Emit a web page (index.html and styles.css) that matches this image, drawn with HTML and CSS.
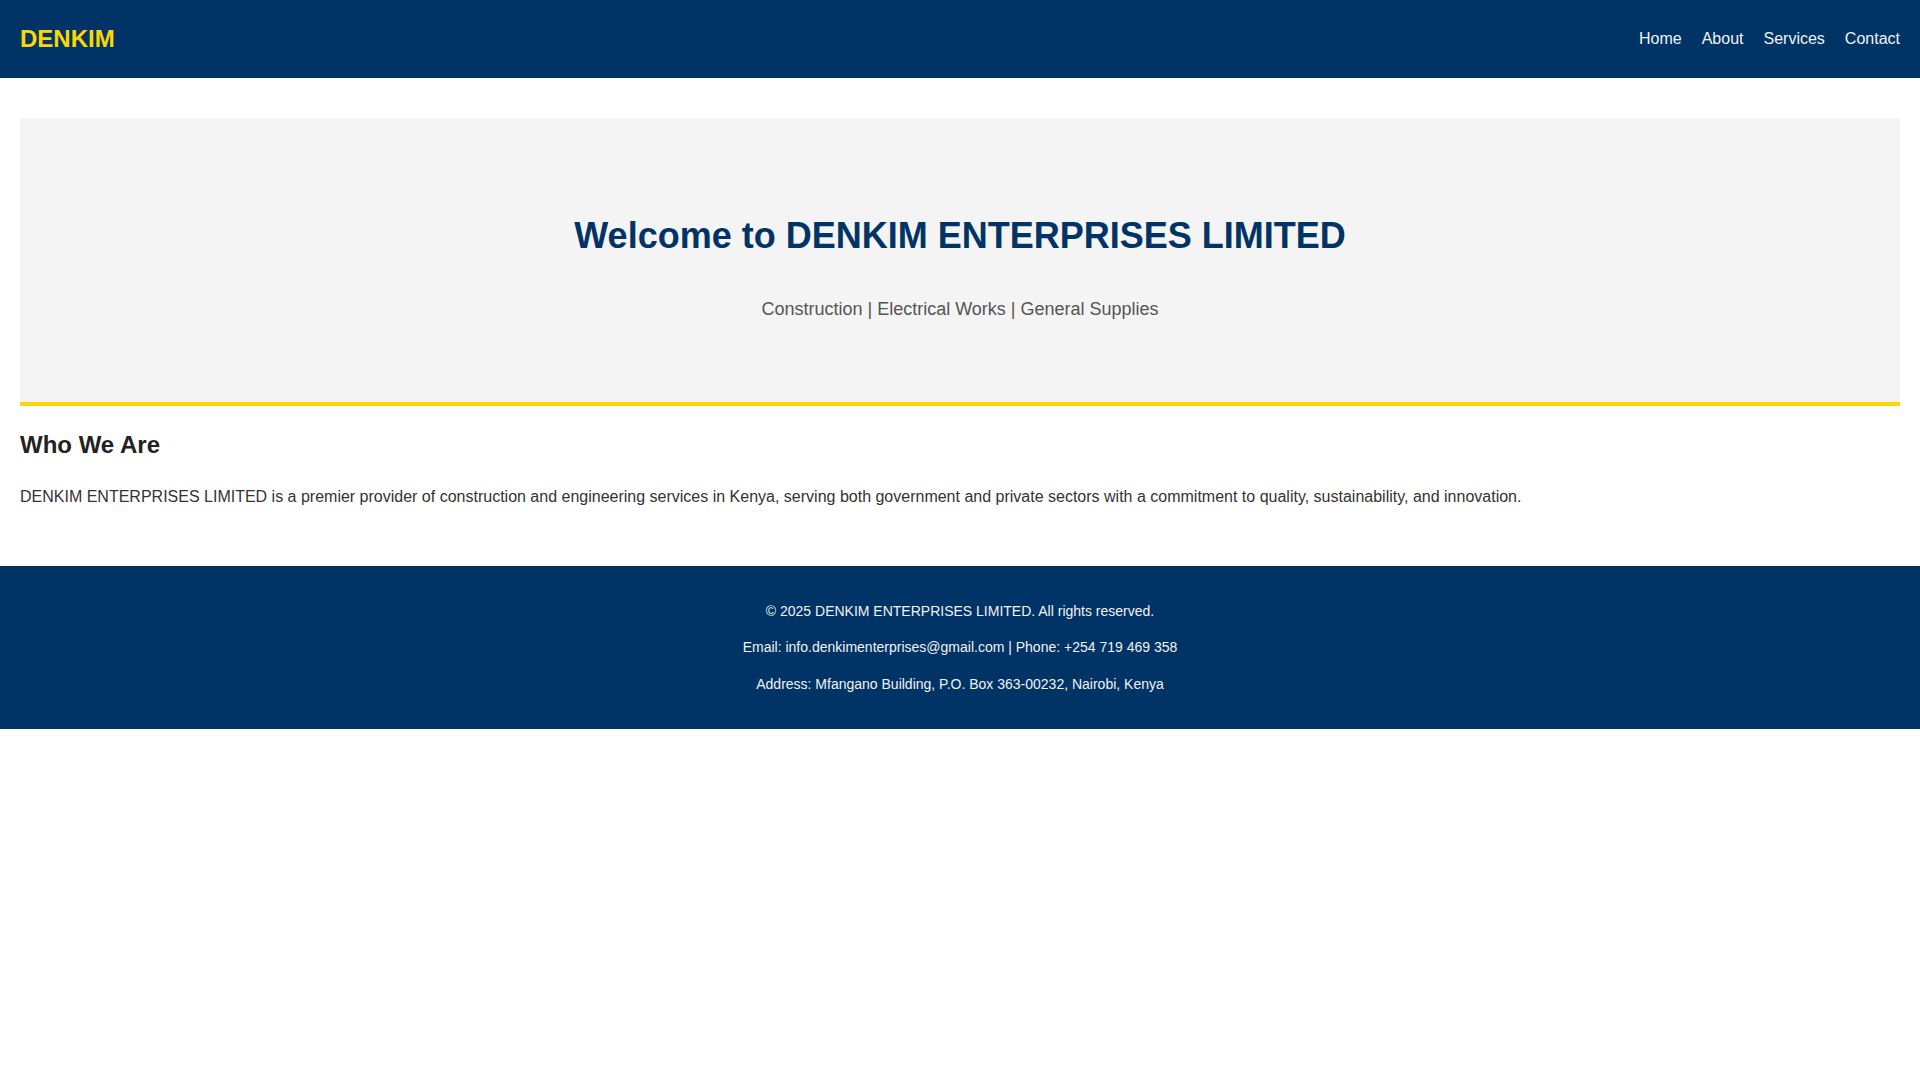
FILE: index.html
```html
<!DOCTYPE html>
<html lang="en">
<head>
<meta charset="utf-8">
<title>DENKIM ENTERPRISES LIMITED</title>
<link rel="stylesheet" href="styles.css">
</head>
<body>
<header class="site-header">
  <div class="logo">DENKIM</div>
  <nav class="nav">
    <a href="#">Home</a>
    <a href="#">About</a>
    <a href="#">Services</a>
    <a href="#">Contact</a>
  </nav>
</header>
<main class="main">
  <section class="hero">
    <h1 class="hero-title">Welcome to DENKIM ENTERPRISES LIMITED</h1>
    <p class="hero-sub">Construction | Electrical Works | General Supplies</p>
  </section>
  <section class="about">
    <h2 class="about-title">Who We Are</h2>
    <p class="about-text">DENKIM ENTERPRISES LIMITED is a premier provider of construction and engineering services in Kenya, serving both government and private sectors with a commitment to quality, sustainability, and innovation.</p>
  </section>
</main>
<footer class="site-footer">
  <p>&copy; 2025 DENKIM ENTERPRISES LIMITED. All rights reserved.</p>
  <p>Email: info.denkimenterprises@gmail.com | Phone: +254 719 469 358</p>
  <p>Address: Mfangano Building, P.O. Box 363-00232, Nairobi, Kenya</p>
</footer>
</body>
</html>
```
FILE: styles.css
```css
* { box-sizing: border-box; }
body {
  margin: 0;
  font-family: "Liberation Sans", Arial, sans-serif;
  line-height: 1.6;
  color: #222;
  background: #fff;
}
.site-header {
  background: #003366;
  padding: 20px;
  display: flex;
  justify-content: space-between;
  align-items: center;
}
.logo {
  color: #ffd700;
  font-size: 24px;
  font-weight: bold;
}
.nav {
  display: flex;
  gap: 20px;
}
.nav a {
  color: #f2f2f2;
  text-decoration: none;
  font-size: 16px;
}
.main {
  padding: 40px 20px;
}
.hero {
  background: #f4f4f4;
  border-bottom: 4px solid #ffd700;
  padding: 60px 20px;
  text-align: center;
}
.hero-title {
  margin: 29px 0 30px;
  font-size: 36px;
  color: #003366;
}
.hero-sub {
  margin: 18px 0;
  font-size: 18px;
  color: #555;
}
.about-title {
  font-size: 24px;
  margin: 20px 0;
  color: #222;
}
.about-text {
  font-size: 16px;
  margin: 16px 0;
  color: #333;
}
.site-footer {
  background: #003366;
  color: #f2f2f2;
  text-align: center;
  padding: 20px;
  font-size: 14px;
}
.site-footer p {
  margin: 14px 0;
}
```
